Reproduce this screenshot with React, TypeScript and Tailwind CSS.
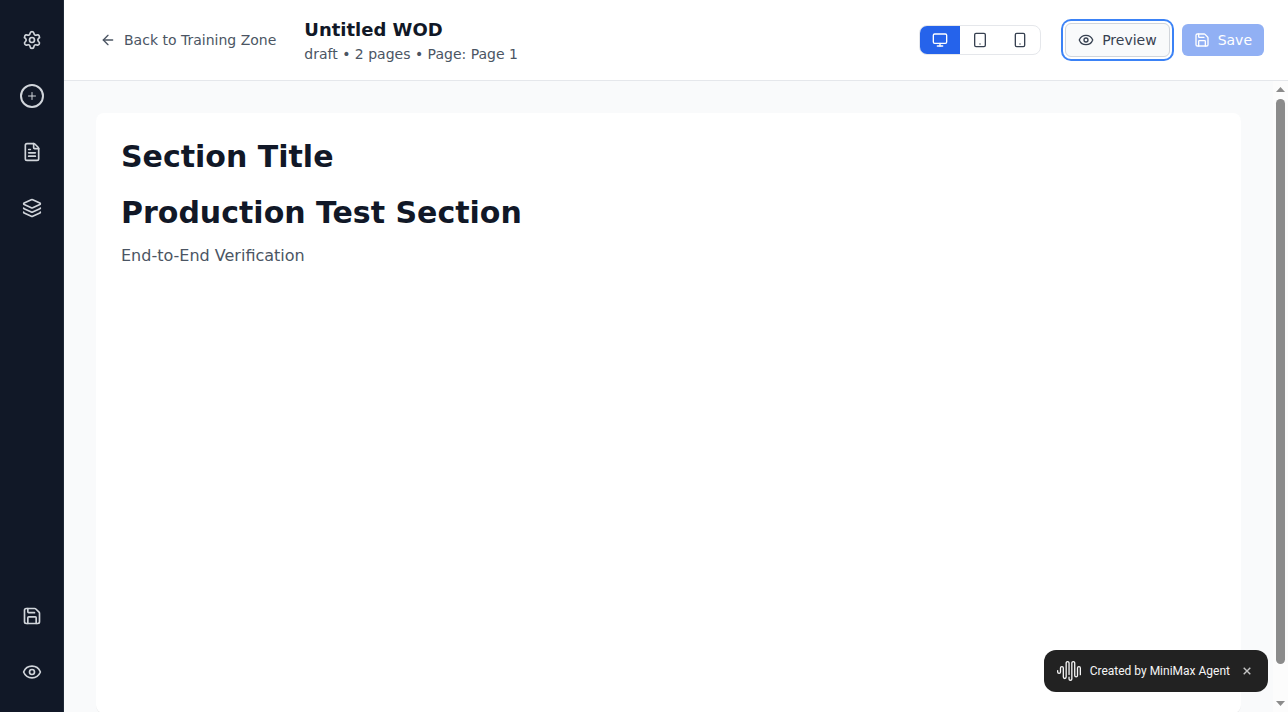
import type { ReactNode } from 'react';
import { ArrowLeft, Eye, FileText, Layers, Monitor, Plus, Save, Settings, Smartphone, Tablet } from 'lucide-react';

function RailButton({ label, children }: { label: string; children: ReactNode }) {
  return (
    <button type="button" aria-label={label} className="flex size-10 items-center justify-center rounded-lg text-[#d1d5db] hover:bg-[#1f2937]">
      {children}
    </button>
  );
}

function Sidebar() {
  return (
    <nav className="flex w-16 shrink-0 flex-col items-center justify-between border-r border-[#1f2937] bg-[#111827] py-5">
      <div className="flex flex-col gap-4">
        <RailButton label="Settings"><Settings size={20} /></RailButton>
        <RailButton label="Add element">
          <span className="flex size-6 items-center justify-center rounded-full border-2 border-[#d1d5db]">
            <Plus size={12} />
          </span>
        </RailButton>
        <RailButton label="Pages"><FileText size={20} /></RailButton>
        <RailButton label="Layers"><Layers size={20} /></RailButton>
      </div>
      <div className="flex flex-col gap-4">
        <RailButton label="Save page"><Save size={20} /></RailButton>
        <RailButton label="Preview page"><Eye size={20} /></RailButton>
      </div>
    </nav>
  );
}

function Header() {
  return (
    <header className="flex shrink-0 items-center justify-between border-b border-[#e5e7eb] bg-white px-6 py-4">
      <div className="flex items-center gap-4">
        <button type="button" className="flex items-center gap-2 rounded-md px-3 py-1.5 text-sm text-[#4b5563]">
          <ArrowLeft size={16} />
          Back to Training Zone
        </button>
        <div>
          <h1 className="text-lg font-bold text-[#111827]">Untitled WOD</h1>
          <p className="text-sm text-[#4b5563]">draft • 2 pages • Page: Page 1</p>
        </div>
      </div>
      <div className="flex items-center gap-3">
        <div className="mr-3 flex overflow-hidden rounded-lg border border-[#e5e7eb] text-[#374151]">
          <button type="button" aria-label="Desktop" className="bg-[#2563eb] px-3 py-1.5 text-white"><Monitor size={16} /></button>
          <button type="button" aria-label="Tablet" className="px-3 py-1.5"><Tablet size={16} /></button>
          <button type="button" aria-label="Mobile" className="px-3 py-1.5"><Smartphone size={16} /></button>
        </div>
        <button type="button" className="flex items-center gap-2 rounded-md border border-[#d1d5db] bg-[#f9fafb] px-3 py-1.5 text-sm text-[#374151] ring-2 ring-[#3b82f6] ring-offset-2">
          <Eye size={16} />
          Preview
        </button>
        <button type="button" disabled className="flex items-center gap-2 rounded-md bg-[#2563eb] px-3 py-1.5 text-sm text-white opacity-50">
          <Save size={16} />
          Save
        </button>
      </div>
    </header>
  );
}

function ScrollTrack() {
  return (
    <div aria-hidden="true" className="flex w-[15px] shrink-0 flex-col items-center bg-[#fcfcfc] py-1.5">
      <svg width="9" height="5" viewBox="0 0 9 5" className="shrink-0" fill="#8b8b8b"><path d="M4.5 0 9 5H0z" /></svg>
      <div className="mt-[7px] h-[565px] w-[9px] rounded-full bg-[#8b8b8b]" />
      <svg width="9" height="5" viewBox="0 0 9 5" className="mt-auto shrink-0" fill="#8b8b8b"><path d="M4.5 5 0 0h9z" /></svg>
    </div>
  );
}

function AgentBadge() {
  return (
    <aside className="fixed right-5 bottom-5 flex h-[42px] items-center rounded-xl bg-[#222222] pr-4 pl-[13px] font-['Roboto',sans-serif] text-xs text-[#f5f5f5]">
      <svg width="24" height="24" viewBox="0 0 24 24" fill="currentColor" aria-hidden="true">
        <path d="M16.278 2c1.156 0 2.093.927 2.093 2.07v12.501a.74.74 0 00.744.709.74.74 0 00.743-.709V9.099a2.06 2.06 0 012.071-2.049A2.06 2.06 0 0124 9.1v6.561a.649.649 0 01-.652.645.649.649 0 01-.653-.645V9.1a.762.762 0 00-.766-.758.762.762 0 00-.766.758v7.472a2.037 2.037 0 01-2.048 2.026 2.037 2.037 0 01-2.048-2.026v-12.5a.785.785 0 00-.788-.753.785.785 0 00-.789.752l-.001 15.904A2.037 2.037 0 0113.441 22a2.037 2.037 0 01-2.048-2.026V18.04c0-.356.292-.645.652-.645.36 0 .652.289.652.645v1.934c0 .263.142.506.372.638.23.131.514.131.744 0a.734.734 0 00.372-.638V4.07c0-1.143.937-2.07 2.093-2.07zm-5.674 0c1.156 0 2.093.927 2.093 2.07v11.523a.648.648 0 01-.652.645.648.648 0 01-.652-.645V4.07a.785.785 0 00-.789-.78.785.785 0 00-.789.78v14.013a2.06 2.06 0 01-2.07 2.048 2.06 2.06 0 01-2.071-2.048V9.1a.762.762 0 00-.766-.758.762.762 0 00-.766.758v3.8a2.06 2.06 0 01-2.071 2.049A2.06 2.06 0 010 12.9v-1.378c0-.357.292-.646.652-.646.36 0 .653.29.653.646V12.9c0 .418.343.757.766.757s.766-.339.766-.757V9.099a2.06 2.06 0 012.07-2.048 2.06 2.06 0 012.071 2.048v8.984c0 .419.343.758.767.758.423 0 .766-.339.766-.758V4.07c0-1.143.937-2.07 2.093-2.07z" />
      </svg>
      <span className="ml-[9px]">Created by MiniMax Agent</span>
      <button type="button" aria-label="Dismiss" className="ml-3 flex size-[10px] items-center justify-center text-[#c4c4c4]">
        <svg width="8" height="8" viewBox="0 0 8 8" fill="none" stroke="currentColor" strokeWidth="1.4"><path d="M.7.7l6.6 6.6M7.3.7L.7 7.3" /></svg>
      </button>
    </aside>
  );
}

export default function App() {
  return (
    <div className="flex h-screen bg-[#f9fafb] font-['DejaVu_Sans',sans-serif]">
      <Sidebar />
      <div className="flex min-w-0 flex-1 flex-col">
        <Header />
        <div className="flex min-h-0 flex-1">
          <main className="min-w-0 flex-1 overflow-hidden p-8">
            <section className="min-h-[600px] rounded-lg border border-transparent bg-white p-6 shadow-2xs">
              <h2 className="mb-[18px] text-3xl leading-[38px] font-bold text-[#111827]">Section Title</h2>
              <h2 className="mb-3 text-3xl leading-[38px] font-bold text-[#111827]">Production Test Section</h2>
              <p className="text-base text-[#4b5563]">End-to-End Verification</p>
            </section>
          </main>
          <ScrollTrack />
        </div>
      </div>
      <AgentBadge />
    </div>
  );
}
